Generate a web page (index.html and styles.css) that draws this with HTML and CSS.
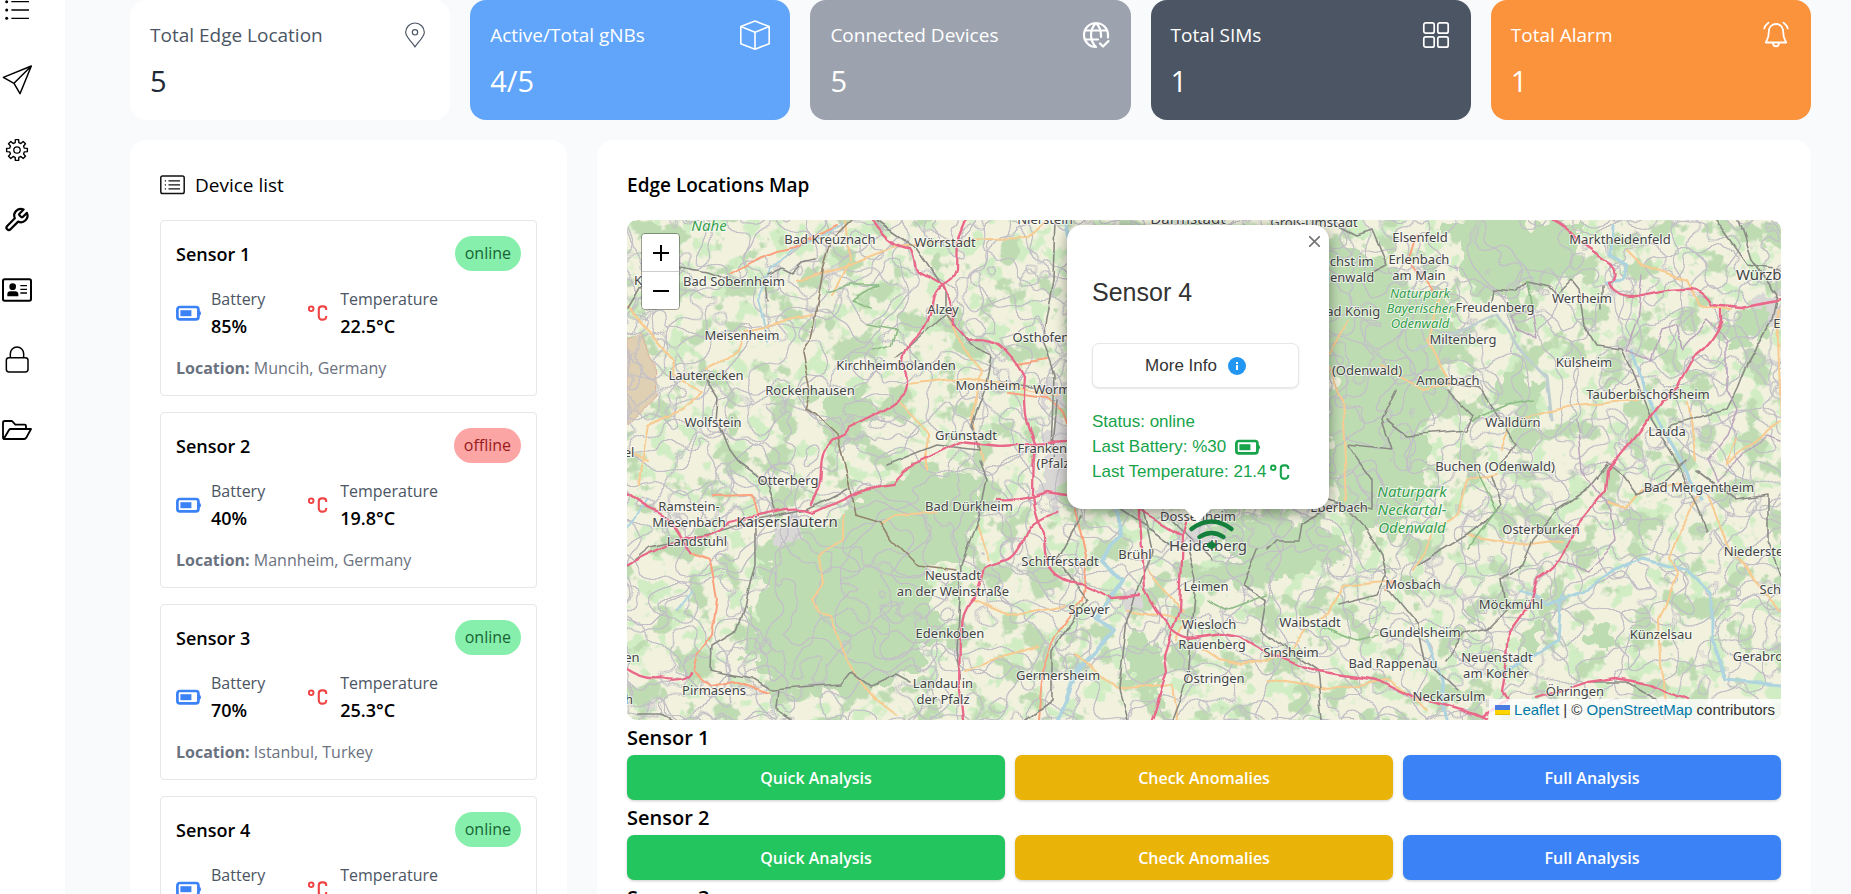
FILE: index.html
```html
<!DOCTYPE html>
<html lang="en">
<head>
<meta charset="utf-8">
<title>Edge Dashboard</title>
<link rel="stylesheet" href="styles.css">
</head>
<body>
<svg class="sprite" aria-hidden="true">
  <symbol id="battery" viewBox="0 0 25 16">
    <rect x="1.400" y="2" width="21" height="12.400" rx="2.400" fill="none" stroke="currentColor" stroke-width="2.700"/>
    <rect x="4.400" y="5.200" width="11" height="6" fill="currentColor"/>
    <path d="M23 5.500q2 .5 2 2.700t-2 2.700z" fill="currentColor"/>
  </symbol>
  <symbol id="celsius" viewBox="0 0 25 16">
    <circle cx="6.200" cy="3.800" r="2.300" fill="none" stroke="currentColor" stroke-width="1.900"/>
    <path d="M21.200 5V4.200a2.800 2.800 0 0 0-2.800-2.800h-1.600a3 3 0 0 0-3 3v7.200a3 3 0 0 0 3 3h1.600a2.800 2.800 0 0 0 2.800-2.800V11" fill="none" stroke="currentColor" stroke-width="2.100"/>
  </symbol>
</svg>
<div class="app">
  <nav class="sidebar" aria-label="Main">
    <a href="#" aria-label="List"><svg viewBox="3 -18 96 96"><path d="M34 5H87M34 30H87M34 55H87" stroke-width="4"/><g fill="#000" stroke="none"><circle cx="20" cy="5" r="4.500"/><circle cx="20" cy="30" r="4.500"/><circle cx="20" cy="55" r="4.500"/></g></svg></a>
    <a href="#" aria-label="Send"><svg viewBox="3 192 96 96"><path d="M94 198L10 232L42 250L60 281ZM42 250L94 198" stroke-width="4.500"/></svg></a>
    <a href="#" aria-label="Settings"><svg viewBox="-16 -16 32 32"><path d="M7.370-1.840L10.370-1.640V1.640L7.370 1.840L6.510 3.910L8.490 6.170L6.170 8.490L3.910 6.510L1.840 7.370L1.640 10.370H-1.640L-1.840 7.370L-3.910 6.510L-6.170 8.490L-8.490 6.170L-6.510 3.910L-7.370 1.840L-10.370 1.640V-1.640L-7.370-1.840L-6.510-3.910L-8.490-6.170L-6.170-8.490L-3.910-6.510L-1.840-7.370L-1.640-10.370H1.640L1.840-7.370L3.910-6.510L6.170-8.490L8.490-6.170L6.510-3.910Z" stroke-width="1.400"/><circle r="3.200" stroke-width="1.300"/></svg></a>
    <a href="#" aria-label="Tools"><svg viewBox="-2 -2.500 29 29"><path d="M14.700 6.300a1 1 0 0 0 0 1.400l1.600 1.600a1 1 0 0 0 1.400 0l3.770-3.770a6 6 0 0 1-7.940 7.940l-6.910 6.910a2.120 2.120 0 0 1-3-3l6.910-6.910a6 6 0 0 1 7.940-7.940l-3.760 3.760z" stroke-width="2"/></svg></a>
    <a href="#" aria-label="Contacts"><svg viewBox="3 822 96 96"><rect x="9" y="838" width="84" height="64" rx="5" stroke-width="6"/><circle cx="38" cy="860" r="10" fill="#000" stroke="none"/><path d="M22 889v-6q0-9 9-9h14q10 0 10 9v6z" fill="#000" stroke="none"/><path d="M61 857H81M61 868H81M61 879H81" stroke-width="4"/></svg></a>
    <a href="#" aria-label="Security"><svg viewBox="3 1032 96 96"><rect x="19" y="1073" width="65" height="43" rx="8" stroke-width="4.500"/><path d="M31 1072V1061a20 20 0 0 1 40 0V1072" stroke-width="4.500"/></svg></a>
    <a href="#" aria-label="Files"><svg viewBox="3 1242 96 96"><path d="M9 1316V1268q0-5 5-5H36L46 1274H74q4 0 4 4V1287M11 1317L27 1290q2-3 5-3H93L79 1313q-3 4-6 4H11Z" stroke-width="5.500"/></svg></a>
  </nav>
  <main class="content">
    <section class="stats">
      <article class="stat">
        <div class="stat-top"><span>Total Edge Location</span><svg viewBox="1200 60 90 90"><path d="M1245 141C1238 128 1217 112 1217 97A28 28 0 1 1 1273 97C1273 112 1252 128 1245 141Z" stroke-width="3.500"/><circle cx="1245" cy="97" r="8" stroke-width="3.500"/></svg></div>
        <div class="stat-value">5</div>
      </article>
      <article class="stat stat-blue">
        <div class="stat-top"><span>Active/Total gNBs</span><svg viewBox="0 0 30 30"><path d="M15 1L29.200 6.600V23.700L15 29.200L.800 23.700V6.600ZM.800 6.600L15 12.200L29.200 6.600M15 12.200V29" stroke-width="1.600"/></svg></div>
        <div class="stat-value">4/5</div>
      </article>
      <article class="stat stat-gray">
        <div class="stat-top"><span>Connected Devices</span><svg viewBox="0 0 30 30"><path d="M15 27A12 12 0 1 1 27 15V17.500M15 27C11.500 23.500 10 19.500 10 15S11.500 6.500 15 3C18.500 6.500 20 10.500 20 15V17M4 10.500H26M4 19.500H17M19 23.500L22 26.500L27.500 21" stroke-width="2.200"/></svg></div>
        <div class="stat-value">5</div>
      </article>
      <article class="stat stat-slate">
        <div class="stat-top"><span>Total SIMs</span><svg viewBox="0 0 30 30"><g stroke-width="1.700"><rect x="2.800" y="2.800" width="10.400" height="10.400" rx="2"/><rect x="16.800" y="2.800" width="10.400" height="10.400" rx="2"/><rect x="2.800" y="16.800" width="10.400" height="10.400" rx="2"/><rect x="16.800" y="16.800" width="10.400" height="10.400" rx="2"/></g></svg></div>
        <div class="stat-value">1</div>
      </article>
      <article class="stat stat-orange">
        <div class="stat-top"><span>Total Alarm</span><svg viewBox="0 0 30 30"><path d="M15 4C10 4 7.800 8 7.800 12C7.800 18 6.500 19.500 4.800 22.500H25.200C23.500 19.500 22.200 18 22.200 12C22.200 8 20 4 15 4ZM12 23C12 27.500 18 27.500 18 23M3.200 8.500Q4.500 4.800 7.500 2.800M26.800 8.500Q25.500 4.800 22.500 2.800" stroke-width="1.800"/></svg></div>
        <div class="stat-value">1</div>
      </article>
    </section>

    <div class="panels">
      <section class="panel devices">
        <h2 class="panel-title"><svg viewBox="0 0 25 20"><rect x=".800" y="1" width="23.400" height="17.600" rx="1.800" stroke-width="1.500"/><path d="M8.500 5.800H20M8.500 9.800H20M8.500 13.800H20M4.800 5.800H6M4.800 9.800H6M4.800 13.800H6" stroke-width="1.300"/></svg>Device list</h2>
        <article class="device">
          <header><h3>Sensor 1</h3><span class="badge">online</span></header>
          <div class="metrics">
            <div class="metric"><svg class="blue"><use href="#battery"/></svg><p>Battery<b>85%</b></p></div>
            <div class="metric"><svg class="red"><use href="#celsius"/></svg><p>Temperature<b>22.5°C</b></p></div>
          </div>
          <p class="location"><strong>Location:</strong> Muncih, Germany</p>
        </article>
        <article class="device">
          <header><h3>Sensor 2</h3><span class="badge badge-off">offline</span></header>
          <div class="metrics">
            <div class="metric"><svg class="blue"><use href="#battery"/></svg><p>Battery<b>40%</b></p></div>
            <div class="metric"><svg class="red"><use href="#celsius"/></svg><p>Temperature<b>19.8°C</b></p></div>
          </div>
          <p class="location"><strong>Location:</strong> Mannheim, Germany</p>
        </article>
        <article class="device">
          <header><h3>Sensor 3</h3><span class="badge">online</span></header>
          <div class="metrics">
            <div class="metric"><svg class="blue"><use href="#battery"/></svg><p>Battery<b>70%</b></p></div>
            <div class="metric"><svg class="red"><use href="#celsius"/></svg><p>Temperature<b>25.3°C</b></p></div>
          </div>
          <p class="location"><strong>Location:</strong> Istanbul, Turkey</p>
        </article>
        <article class="device">
          <header><h3>Sensor 4</h3><span class="badge">online</span></header>
          <div class="metrics">
            <div class="metric"><svg class="blue"><use href="#battery"/></svg><p>Battery<b>30%</b></p></div>
            <div class="metric"><svg class="red"><use href="#celsius"/></svg><p>Temperature<b>21.4°C</b></p></div>
          </div>
        </article>
      </section>

      <section class="panel locations">
        <h2 class="panel-title strong">Edge Locations Map</h2>
        <div class="map">
          <svg class="tiles" viewBox="0 0 1154 500" preserveAspectRatio="xMidYMid slice">
            <defs>
              <filter id="woods" x="0" y="0" width="100%" height="100%" color-interpolation-filters="sRGB">
                <feTurbulence type="fractalNoise" baseFrequency=".035" numOctaves="4" seed="8"/>
                <feColorMatrix values="0 0 0 0 .745 0 0 0 0 .86 0 0 0 0 .7 14 0 0 0 -7.900"/>
              </filter>
              <filter id="meadow" x="0" y="0" width="100%" height="100%" color-interpolation-filters="sRGB">
                <feTurbulence type="fractalNoise" baseFrequency=".05" numOctaves="3" seed="21"/>
                <feColorMatrix values="0 0 0 0 .82 0 0 0 0 .93 0 0 0 0 .77 12 0 0 0 -6.600"/>
              </filter>
              <filter id="lanes" x="0" y="0" width="100%" height="100%" color-interpolation-filters="sRGB">
                <feTurbulence type="fractalNoise" baseFrequency=".018" numOctaves="3" seed="5"/>
                <feColorMatrix values="0 0 0 0 .76 0 0 0 0 .75 0 0 0 0 .78 90 0 0 0 -42" result="area"/>
                <feMorphology operator="dilate" radius="1"/>
                <feComposite operator="out" in2="area"/>
              </filter>
              <filter id="lanes-b" x="0" y="0" width="100%" height="100%" color-interpolation-filters="sRGB">
                <feTurbulence type="fractalNoise" baseFrequency=".014" numOctaves="3" seed="33"/>
                <feColorMatrix values="0 0 0 0 .76 0 0 0 0 .75 0 0 0 0 .78 0 90 0 0 -46" result="area"/>
                <feMorphology operator="dilate" radius="1"/>
                <feComposite operator="out" in2="area"/>
              </filter>
              <filter id="lanes-c" x="0" y="0" width="100%" height="100%" color-interpolation-filters="sRGB">
                <feTurbulence type="fractalNoise" baseFrequency=".02" numOctaves="2" seed="47"/>
                <feColorMatrix values="0 0 0 0 .76 0 0 0 0 .75 0 0 0 0 .78 0 0 90 0 -45" result="area"/>
                <feMorphology operator="dilate" radius="1"/>
                <feComposite operator="out" in2="area"/>
              </filter>
              <filter id="ragged" x="-5%" y="-5%" width="110%" height="110%">
                <feTurbulence type="fractalNoise" baseFrequency=".05" numOctaves="3" seed="3"/>
                <feDisplacementMap in="SourceGraphic" scale="42" xChannelSelector="R" yChannelSelector="G"/>
              </filter>
              <filter id="wobble" x="0" y="0" width="1154" height="500" filterUnits="userSpaceOnUse" color-interpolation-filters="sRGB">
                <feTurbulence type="fractalNoise" baseFrequency=".04" numOctaves="1" seed="12"/>
                <feDisplacementMap in="SourceGraphic" scale="9" xChannelSelector="R" yChannelSelector="G"/>
                <feGaussianBlur stdDeviation=".4"/>
              </filter>
            </defs>
            <rect width="1154" height="500" fill="#f1f1de"/>
            <rect width="1154" height="500" filter="url(#meadow)"/>
            <rect width="1154" height="500" filter="url(#woods)"/>
            <g fill="#bedcb2" filter="url(#ragged)">
              <path d="M235 272L300 250L350 255L352 300L330 345L295 352L318 400L300 440L262 470L190 470L150 458L112 430L128 380L138 330L160 312L205 305Z"/>
              <path d="M690 20L740 30L770 60L815 70L830 130L805 190L800 250L770 320L720 300L700 250L705 160L690 100Z"/>
              <path d="M590 300L690 295L720 330L680 350L610 370Z"/>
              <path d="M820 0L950 0L955 50L930 65L870 80L845 70Z"/>
              <path d="M195 175L240 170L245 210L200 205ZM500 420L535 415L530 480L500 470ZM600 210L640 220L640 280L600 270Z"/>
              <path d="M870 150L915 165L905 200L870 190ZM890 410L920 405L910 430L885 430ZM1100 95L1150 85L1140 120L1100 125ZM955 410L990 405L985 430L955 430Z"/>
            </g>
            <path d="M0 118L12 112L28 145L30 175L12 195L0 205Z" fill="#dfd0b4" stroke="#deb09c" filter="url(#wobble)"/>
            <g fill="#d9d7d5" filter="url(#ragged)"><circle cx="160" cy="312" r="12"/><circle cx="575" cy="316" r="12"/><ellipse cx="428" cy="240" rx="12" ry="42"/><circle cx="1145" cy="85" r="14"/><circle cx="426" cy="170" r="12"/><circle cx="505" cy="385" r="10"/></g>
            <rect width="1154" height="500" filter="url(#lanes)"/>
            <rect width="1154" height="500" filter="url(#lanes-b)"/>
            <rect width="1154" height="500" filter="url(#lanes-c)"/>
            <g fill="none" stroke-linejoin="round" stroke-linecap="round" filter="url(#wobble)">
              <g stroke="#add4df" stroke-width="2">
                <path d="M140 120L130 80L142 50L180 20L215 5M0 310L20 280M50 390L65 370"/>
                <path d="M438 0L452 50L460 140L445 200L460 260L490 285L492 315L475 340L495 360L470 400L488 410L450 450L432 500" stroke-width="4"/>
                <path d="M1006 130L1018 170L1040 215L1060 250L1075 280M895 370L920 385L960 370L990 350L1015 338L1060 350L1085 375L1085 420L1100 460L1154 465M800 420L815 460L820 500M935 375L932 420L870 455M985 5L983 35L1000 45L995 60L978 62" stroke-width="3"/>
                <path d="M790 130L870 95L890 125L920 155L925 200" stroke="#bfcfcf" stroke-width="3"/>
              </g>
              <g stroke="#f8cb91" stroke-width="2">
                <path d="M0 88L22 112L45 140L47 155L75 172L55 190L20 205L15 235L12 265"/>
                <path d="M80 150L90 145L110 130L118 110L185 95M170 60L220 45L270 26L330 20L400 18L420 0M218 0L222 40L205 75"/>
                <path d="M320 92L335 130L355 150L345 200L355 240M280 165L340 158L410 172L430 175M272 180L300 215L300 250"/>
                <path d="M255 305L270 295L310 292M215 295L215 320L192 335L196 365L185 380L191 392L205 395L218 440L240 468L250 480L270 495M350 305L362 340M345 380L380 395L440 385M340 450L410 425"/>
                <path d="M500 390L560 400L550 420M520 350L555 390M575 430L590 440L615 445L640 440L665 430L680 410M720 100L700 140L715 180L720 280"/>
                <path d="M0 230L20 240M753 145L795 170L820 165M890 200L940 187L1010 180M815 70L800 120L822 165M874 230L885 202M1000 30L1015 45L1060 60L1072 85L1105 90M1150 90L1154 200L1130 220L1100 245"/>
                <path d="M690 400L700 395L715 365L770 360M785 350L810 310L830 295L840 260L870 253M840 315L895 325L935 320M980 282L1000 288L1015 270L1060 262"/>
                <path d="M1072 275L1060 300L1042 335L1052 355L1040 380L1030 400L1032 440L1040 480M1080 275L1100 325L1130 360L1154 392M1060 180L1068 240"/>
                <path d="M1100 245L1110 220M640 460L700 470L760 460L800 490M450 435L490 470L545 465L550 500"/>
              </g>
              <g stroke="#fba27f" stroke-width="2">
                <path d="M104 54L125 42L150 32L170 28L180 18L210 5M790 15L782 40L797 60L805 70M85 276L125 275L130 295M65 333L83 340L90 380L85 415L70 435L66 450L83 465L105 460L140 472"/>
                <path d="M390 145L420 140M380 173L420 178L436 190L447 220L448 290L460 340L455 380L425 420L415 450L410 500M770 360L760 370"/>
              </g>
              <g stroke="#8b8b86" stroke-width="1.600">
                <path d="M225 0L205 20L196 50L190 85L184 120L176 132L184 170L178 190L192 198L210 215L217 240L228 295L255 303L265 320L290 345L330 350" stroke="#92846f"/>
                <path d="M140 55L155 48L165 53L175 43L190 40M140 80L138 60M53 48L80 53L100 60M0 90L15 65M250 0L290 28L305 50L318 70L318 95L280 130L270 138"/>
                <path d="M320 95L343 125L365 135L360 165L345 205L352 230L310 225L260 245M428 0L426 60L415 120L427 155L424 230M393 165L425 170M430 180L425 240"/>
                <path d="M80 160L92 180L90 200L103 230L112 242L140 262L148 290M0 345L22 327L90 312L130 300L180 290L220 270M128 300L128 345L118 385L110 410L85 425L84 450L95 453L125 458L145 470L215 465L225 452L245 467L270 455L285 463M152 470L150 490L165 500"/>
                <path d="M352 240L360 260L352 300L335 345L330 430L335 460M455 295L430 340L460 380L425 430L425 480L398 500M490 287L555 330M515 285L525 330L500 400L492 470L500 500M560 330L568 360L560 460L545 500M540 295L585 340"/>
                <path d="M863 80L865 70L890 72L900 60L920 65L930 75L945 60L953 70L958 105L970 125L995 128L1005 150L1025 200L1055 250L1080 310M975 65L975 90M1088 0L1120 45L1154 50M1112 0L1125 40L1150 75L1145 100L1120 145L1110 170L1100 190L1080 195L1045 205L1040 215"/>
                <path d="M808 162L855 168L870 195L880 210L890 225L870 245M700 0L730 15L745 10L760 45L740 55M770 170L755 200L765 230L720 225L745 260L745 290L680 275M820 170L845 195L838 210L780 215L760 200"/>
                <path d="M640 330L650 320L672 320L675 305L715 282L740 310L755 335L760 355L750 375L710 385M630 330L615 365L640 380L635 410L660 430L690 450L695 500M762 370L790 405L797 440L830 470M980 245L960 270L930 290L905 320L895 345L875 360L880 390L860 410L838 415L820 440M790 345L840 315L860 300L875 285L865 255"/>
                <path d="M980 243L995 255L1010 275L1040 260L1060 240M1070 250L1110 280L1140 275L1140 320L1154 355M965 462L1000 462L1030 480L1040 500M10 495L35 495L45 500"/>
              </g>
              <g stroke="#bba5bd" stroke-width="1.500"><path d="M1015 55L1010 100L1000 130L1025 140L1035 110L1050 105L1055 130L1080 100L1100 120L1100 170L1110 190L1100 215L1080 240L1090 260L1140 215L1154 220M890 110L910 120L905 90L885 95ZM950 200L955 250L985 290L990 320L960 350L930 340"/></g>
              <g stroke="#8dbb85" stroke-width="1.600"><path d="M200 72L225 65L250 65L225 80L245 88M240 105L270 110L265 125L245 130M900 60L905 90M845 200L880 185L905 180M580 380L600 390L640 375M850 250L870 290L840 330M680 400L730 420L750 415"/></g>
              <g stroke="#e96889" stroke-width="2.300">
                <path d="M246 0C258 18 270 28 283 28C290 38 286 50 293 52C303 57 310 60 316 65C322 61 328 58 330 50L331 20L339 0"/>
                <path d="M316 65Q303 75 304 90Q300 110 286 122Q276 133 276 143Q283 163 278 173Q270 183 246 195L220 208Q218 218 206 220Q195 230 195 250Q195 265 185 285"/>
                <path d="M316 65Q326 87 326 105L341 120Q363 117 373 125Q390 140 398 157Q395 190 401 207L407 223L406 275Q408 295 418 313Q418 335 422 347Q432 362 453 363Q470 370 485 378L513 376"/>
                <path d="M0 274Q20 290 30 292Q45 300 48 307L65 333M0 344Q30 328 60 317Q90 318 103 302L150 292Q175 287 186 293L225 275Q245 267 265 265Q275 248 293 242L333 222L373 226L439 222"/>
                <path d="M439 275L420 272Q393 282 370 280M428 292Q406 300 400 312Q390 337 380 340Q363 345 358 348Q353 373 343 383Q333 395 334 413L333 470L336 500M0 449Q17 460 33 458Q56 463 63 452"/>
                <path d="M512 282L512 300L517 370Q540 415 563 419L595 414L614 417L640 432L683 450L750 460L785 478Q830 485 860 500"/>
                <path d="M510 288L555 315L552 390L538 435L540 450L525 500M555 315L560 300"/>
                <path d="M926 0Q942 8 950 20L985 45Q992 60 980 62Q985 77 1010 76Q1055 66 1070 70Q1080 75 1085 85L1115 88L1154 80M1095 90L1095 102Q1085 125 1070 135Q1055 160 1052 168L1035 180L1010 213L980 250L978 270L950 305L940 325Q935 345 910 360L905 380L882 412L880 440L875 470L880 480L857 498M910 478L960 462L990 458L1020 464L1060 480"/>
              </g>
            </g>
            <g class="labels">
              <text x="203" y="19">Bad Kreuznach</text><text x="318" y="22">Wörrstadt</text><text x="418" y="-1">Nierstein</text><text x="107" y="61">Bad Sobernheim</text><text x="11" y="60">K</text><text x="115" y="115">Meisenheim</text><text x="316" y="89">Alzey</text><text x="414" y="117">Osthofen</text><text x="79" y="155">Lauterecken</text><text x="183" y="170">Rockenhausen</text><text x="269" y="145">Kirchheimbolanden</text><text x="361" y="165">Monsheim</text><text x="428" y="169">Worms</text><text x="86" y="202">Wolfstein</text><text x="339" y="215">Grünstadt</text><text x="427" y="228">Frankenthal</text><text x="428" y="243">(Pfalz)</text><text x="2" y="232">el</text>
              <text x="161" y="260">Otterberg</text><text x="62" y="286">Ramstein-</text><text x="62" y="302">Miesenbach</text><text x="70" y="321">Landstuhl</text><text x="342" y="286">Bad Dürkheim</text><text x="433" y="341">Schifferstadt</text><text x="326" y="355">Neustadt</text><text x="326" y="371">an der Weinstraße</text><text x="323" y="413">Edenkoben</text><text x="431" y="455">Germersheim</text><text x="316" y="463">Landau in</text><text x="316" y="479">der Pfalz</text><text x="462" y="389">Speyer</text><text x="5" y="437">en</text><text x="87" y="470">Pirmasens</text><text x="2" y="479">h</text>
              <text x="687" y="2">Groß-Umstadt</text><text x="793" y="17">Elsenfeld</text><text x="792" y="39">Erlenbach</text><text x="792" y="55">am Main</text><text x="716" y="41">Höchst im</text><text x="716" y="57">Odenwald</text><text x="722" y="91">Bad König</text><text x="740" y="150">(Odenwald)</text><text x="836" y="119">Miltenberg</text><text x="868" y="87">Freudenberg</text><text x="955" y="78">Wertheim</text><text x="993" y="19">Marktheidenfeld</text><text x="1150" y="103">E</text><text x="957" y="142">Külsheim</text><text x="821" y="160">Amorbach</text><text x="1021" y="174">Tauberbischofsheim</text><text x="1040" y="211">Lauda</text><text x="886" y="202">Walldürn</text><text x="868" y="246">Buchen (Odenwald)</text>
              <text x="712" y="287">Eberbach</text><text x="571" y="296">Dossenheim</text><text x="508" y="334">Brühl</text><text x="579" y="366">Leimen</text><text x="582" y="404">Wiesloch</text><text x="585" y="424">Rauenberg</text><text x="587" y="458">Östringen</text><text x="683" y="402">Waibstadt</text><text x="664" y="432">Sinsheim</text><text x="786" y="364">Mosbach</text><text x="793" y="412">Gundelsheim</text><text x="766" y="443">Bad Rappenau</text><text x="822" y="476">Neckarsulm</text><text x="1072" y="267">Bad Mergentheim</text><text x="914" y="309">Osterburken</text><text x="1139" y="331">Niederstetten</text><text x="1167" y="369">Schrozberg</text><text x="884" y="384">Möckmühl</text><text x="1034" y="414">Künzelsau</text><text x="1139" y="436">Gerabronn</text><text x="870" y="437">Neuenstadt</text><text x="869" y="453">am Kocher</text><text x="948" y="471">Öhringen</text>
              <g class="city"><text x="160" y="301">Kaiserslautern</text><text x="561" y="-2">Darmstadt</text><text x="1144" y="54">Würzburg</text><text x="581" y="325">Heidelberg</text></g>
              <g class="park"><text x="82" y="5">Nahe</text><text x="785" y="271">Naturpark</text><text x="785" y="289">Neckartal-</text><text x="785" y="307">Odenwald</text></g>
              <g class="park park-small"><text x="793" y="73">Naturpark</text><text x="793" y="88">Bayerischer</text><text x="793" y="103">Odenwald</text></g>
            </g>
            <g transform="translate(584.500 325)" fill="none" stroke="#15803d" stroke-width="4.500" stroke-linecap="round"><path d="M-20-16Q0-31 20-16M-12-8Q0-16 12-8"/><path d="M-4.800-1L0-4L4.800-1L4.200 2L0 4.500L-4.200 2Z" fill="#15803d" stroke="none"/></g>
          </svg>
          <div class="zoom"><button type="button" aria-label="Zoom in"><svg viewBox="0 0 16 16"><path d="M0 8H16M8 0V16"/></svg></button><button type="button" aria-label="Zoom out"><svg viewBox="0 0 16 16"><path d="M0 8H16"/></svg></button></div>
          <div class="popup" role="dialog" aria-label="Sensor 4">
            <button class="close" type="button" aria-label="Close"><svg viewBox="0 0 10 10"><path d="M0 0L10 10M10 0L0 10"/></svg></button>
            <h3>Sensor 4</h3>
            <button class="more" type="button">More Info <svg viewBox="0 0 18 18"><circle cx="9" cy="9" r="9" fill="#2196f3"/><path d="M8 8h2v5H8zM8 5h2v2H8z" fill="#fff"/></svg></button>
            <p>Status: online</p>
            <p>Last Battery: %30 <svg class="level"><use href="#battery"/></svg></p>
            <p>Last Temperature: 21.4<svg><use href="#celsius"/></svg></p>
          </div>
          <div class="credit"><svg viewBox="0 0 15 10"><path d="M0 0H15V5H0Z" fill="#4c7be1"/><path d="M0 5H15V10H0Z" fill="#ffd500"/><path d="M0 9H15V10H0Z" fill="#e0bc00"/></svg> <a href="#">Leaflet</a> | © <a href="#">OpenStreetMap</a> contributors</div>
        </div>
        <h3 class="sensor">Sensor 1</h3>
        <div class="actions"><button type="button" class="quick">Quick Analysis</button><button type="button" class="check">Check Anomalies</button><button type="button" class="full">Full Analysis</button></div>
        <h3 class="sensor">Sensor 2</h3>
        <div class="actions"><button type="button" class="quick">Quick Analysis</button><button type="button" class="check">Check Anomalies</button><button type="button" class="full">Full Analysis</button></div>
        <h3 class="sensor">Sensor 3</h3>
        <div class="actions"><button type="button" class="quick">Quick Analysis</button><button type="button" class="check">Check Anomalies</button><button type="button" class="full">Full Analysis</button></div>
      </section>
    </div>
  </main>
</div>
</body>
</html>
```

FILE: styles.css
```css
* { box-sizing: border-box; }
body, h2, h3, p { margin: 0; }
body {
  background: #f8fafc;
  color: #000;
  font-family: "Open Sans", "Noto Sans", sans-serif;
  font-size: 16px;
}
button { font: inherit; cursor: pointer; }
.sprite { position: absolute; width: 0; height: 0; }

.app { display: flex; height: 100vh; overflow: hidden; }
.sidebar {
  flex: 0 0 65px;
  display: flex;
  flex-direction: column;
  gap: 38px;
  padding-left: 1px;
  margin-top: -6px;
  background: #fff;
}
.sidebar a { display: block; height: 32px; }
.sidebar svg {
  display: block;
  width: 32px;
  height: 32px;
  fill: none;
  stroke: #000;
  stroke-linejoin: round;
}
.content { flex: 1; min-width: 0; padding: 0 40px 0 65px; }

.stats { display: grid; grid-template-columns: repeat(5, 1fr); gap: 20px; }
.stat { padding: 20px; border-radius: 16px; background: #fff; color: #4b5563; }
.stat-top { display: flex; align-items: center; justify-content: space-between; height: 30px; font-size: 19px; white-space: nowrap; }
.stat-top svg { width: 30px; height: 30px; fill: none; stroke: currentColor; stroke-linejoin: round; stroke-linecap: round; }
.stat-value { margin-top: 11px; font-size: 29px; line-height: 39px; color: #1f2937; }
.stat-blue { background: #60a5fa; }
.stat-gray { background: #9ca3af; }
.stat-slate { background: #4b5563; }
.stat-orange { background: #fb923c; }
.stat-blue, .stat-gray, .stat-slate, .stat-orange,
.stat-blue .stat-value, .stat-gray .stat-value, .stat-slate .stat-value, .stat-orange .stat-value { color: #fff; }

.panels { display: flex; align-items: flex-start; gap: 30px; margin-top: 20px; }
.panel { padding: 30px; border-radius: 16px; background: #fff; }
.devices { flex: 0 0 26%; }
.locations { flex: 1; min-width: 0; }
.panel-title {
  display: flex;
  align-items: center;
  gap: 10px;
  margin-bottom: 20px;
  font-size: 19px;
  font-weight: 400;
  line-height: 30px;
}
.panel-title svg { width: 25px; height: 20px; fill: none; stroke: #111; }
.panel-title.strong { font-weight: 600; }

.device { margin-bottom: 16px; padding: 15px; border: 1px solid #e5e7eb; border-radius: 4px; }
.device header { display: flex; align-items: center; justify-content: space-between; }
.device h3 { font-size: 18px; font-weight: 600; }
.badge { padding: 0 10px; border-radius: 18px; background: #86efac; color: #166534; font-size: 16px; line-height: 35px; }
.badge-off { background: #fca5a5; color: #991b1b; }
.metrics { display: flex; gap: 40px; margin: 15px 0 16px; }
.metric { display: flex; align-items: center; gap: 10px; color: #4b5563; line-height: 27px; }
.metric svg { width: 25px; height: 16px; }
.metric .blue { color: #3b82f6; }
.metric .red { color: #ef4444; }
.metric b { display: block; color: #000; font-size: 18px; font-weight: 600; }
.location { color: #6b7280; line-height: 24px; }

.map {
  position: relative;
  height: 500px;
  overflow: hidden;
  border-radius: 10px;
  color: #333;
  font-family: "Liberation Sans", Arial, sans-serif;
}
.tiles { display: block; width: 100%; height: 100%; }
.labels {
  fill: #444;
  stroke: rgba(255, 255, 255, .7);
  stroke-width: 2px;
  paint-order: stroke;
  text-anchor: middle;
  dominant-baseline: central;
  font-family: "Noto Sans", sans-serif;
  font-size: 13px;
}
.city { font-size: 15px; }
.park { fill: #36a04c; font-size: 15px; font-style: italic; }
.park-small { font-size: 13px; }
.zoom {
  position: absolute;
  top: 13px;
  left: 14px;
  display: grid;
  border: 1px solid rgba(0, 0, 0, .35);
  border-radius: 4px;
  overflow: hidden;
}
.zoom button { display: grid; place-items: center; width: 37px; height: 37px; padding: 0; border: 0; background: #fff; }
.zoom button + button { height: 38px; border-top: 1px solid #ccc; }
.zoom svg { width: 16px; height: 16px; stroke: #000; stroke-width: 2; }
.popup {
  position: absolute;
  top: 5px;
  left: calc(50% - 137px);
  width: 262px;
  height: 284px;
  padding: 52px 30px 0 25px;
  border-radius: 15px;
  background: #fff;
  box-shadow: 0 3px 14px rgba(0, 0, 0, .4);
  font-size: 17px;
}
.popup::after {
  content: "";
  position: absolute;
  top: 100%;
  left: calc(50% - 13px);
  border: 13px solid transparent;
  border-top-color: #fff;
  border-bottom: 0;
}
.popup h3 { margin-bottom: 36px; font-size: 25px; font-weight: 400; line-height: 30px; }
.popup p { color: #16a34a; line-height: 25px; white-space: nowrap; }
.popup p svg { width: 25px; height: 16px; vertical-align: -3px; }
.popup p .level { margin-left: 4px; }
.close { position: absolute; top: 11px; right: 9px; display: grid; padding: 0; border: 0; background: none; }
.close svg { width: 11px; height: 11px; stroke: #757575; stroke-width: 1.5; }
.more {
  display: flex;
  align-items: center;
  justify-content: center;
  gap: 11px;
  width: 100%;
  height: 45px;
  margin-bottom: 21px;
  border: 1px solid #e5e7eb;
  border-radius: 7px;
  background: #fff;
  box-shadow: 0 1px 2px rgba(0, 0, 0, .1);
  color: #333;
}
.more svg { width: 18px; height: 18px; }
.credit {
  position: absolute;
  right: 0;
  bottom: 0;
  padding: 0 6px;
  background: rgba(255, 255, 255, .8);
  font-size: 15px;
  line-height: 21px;
}
.credit svg { width: 15px; height: 10px; }
.credit a { color: #0078a8; text-decoration: none; }

.sensor { font-size: 20px; font-weight: 600; line-height: 35px; }
.actions { display: grid; grid-template-columns: repeat(3, 1fr); gap: 10px; }
.actions button {
  height: 45px;
  border: 0;
  border-radius: 7px;
  box-shadow: 0 1px 3px rgba(0, 0, 0, .2);
  color: #fff;
  font-size: 16px;
  font-weight: 600;
}
.quick { background: #22c55e; }
.check { background: #eab308; }
.full { background: #3b82f6; }
```
